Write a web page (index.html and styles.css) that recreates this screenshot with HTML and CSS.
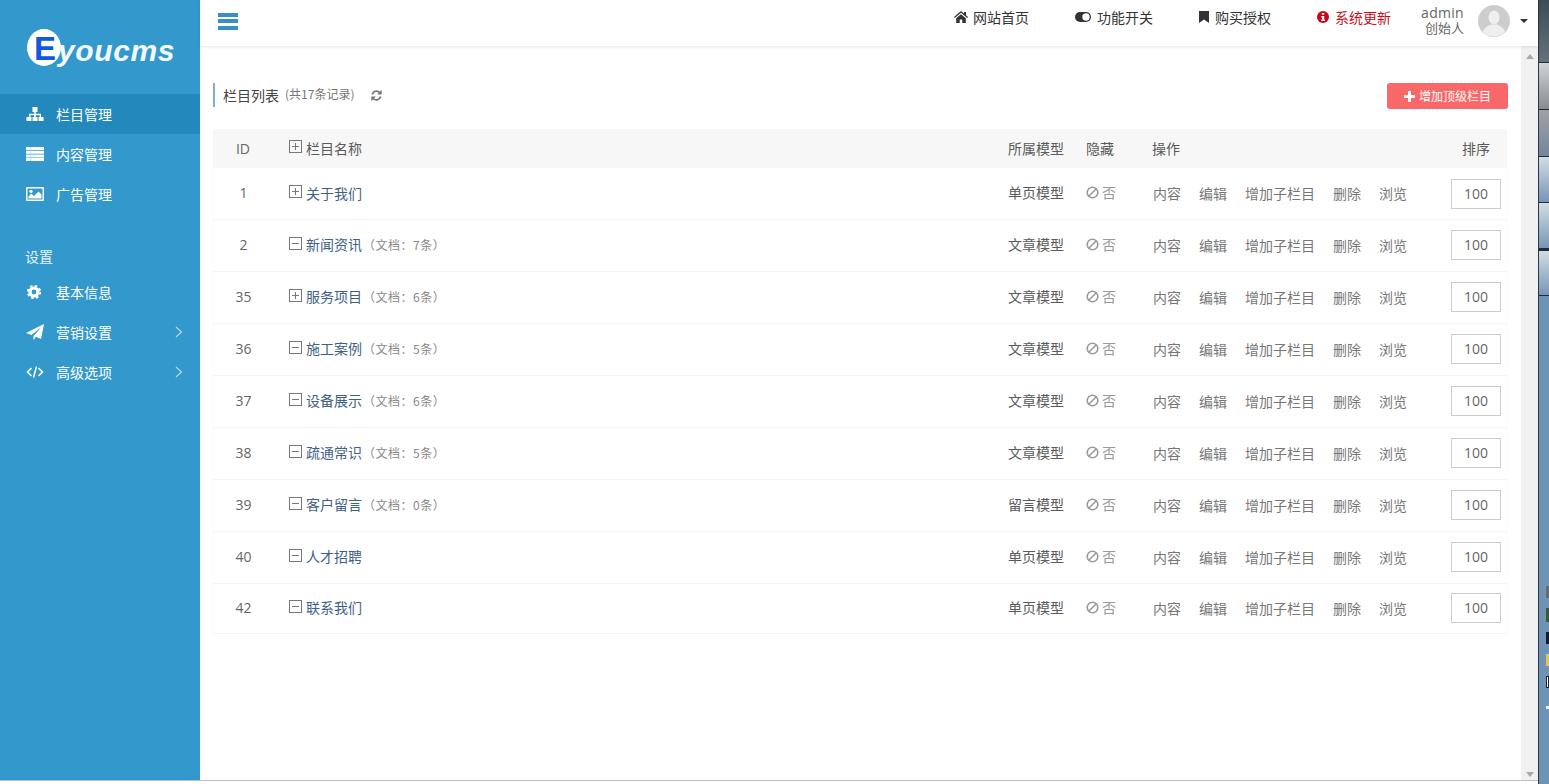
FILE: index.html
```html
<!DOCTYPE html>
<html lang="zh-CN">
<head>
<meta charset="utf-8">
<title>栏目管理</title>
<link rel="stylesheet" href="styles.css">
</head>
<body>
<svg class="defs" aria-hidden="true">
  <symbol id="i-ban" viewBox="0 0 14 14"><circle cx="7" cy="7" r="5.700" fill="none" stroke="currentColor" stroke-width="1.700"/><path d="M3 11 11 3" stroke="currentColor" stroke-width="1.700"/></symbol>
</svg>
<div class="screen">
  <div class="app">
    <aside class="sidebar">
      <div class="logo"><span class="logo-mark">E</span><span class="logo-text">youcms</span></div>
      <nav class="nav">
        <a class="nav-item active">
          <svg class="nav-icon" viewBox="0 0 18 14"><path d="M6.500 0h5v5h-1.700v1.800H15V10h2.500v4h-5v-4h1.200V8.200H9.800V10h1.700v4h-5v-4h1.700V8.200H4.300V10h1.200v4h-5v-4H3V6.800h5.200V5H6.500z" fill="#fff"/></svg>
          <span>栏目管理</span></a>
        <a class="nav-item">
          <svg class="nav-icon" viewBox="0 0 18 14"><path d="M0 0h18v3H0zM0 3.700h18v3H0zM0 7.400h18v3H0zM0 11h18v3H0z" fill="#fff"/><path d="M4.500 0h.7v14h-.7z" fill="#a8d4ee"/></svg>
          <span>内容管理</span></a>
        <a class="nav-item">
          <svg class="nav-icon" viewBox="0 0 18 14"><path d="M1 0h16a1 1 0 0 1 1 1v12a1 1 0 0 1-1 1H1a1 1 0 0 1-1-1V1a1 1 0 0 1 1-1zm.5 1.500v11h15v-11z" fill="#fff"/><path d="M2.500 11.500V9.500l3-3 2.500 2.500 4.500-4.500 3 3v4z" fill="#fff"/><circle cx="5" cy="4.300" r="1.600" fill="#fff"/></svg>
          <span>广告管理</span></a>
        <div class="nav-title">设置</div>
        <a class="nav-item">
          <svg class="nav-icon" viewBox="0 0 18 14"><circle cx="8" cy="7" r="4" fill="none" stroke="#fff" stroke-width="3.200"/><circle cx="8" cy="7" r="6.200" fill="none" stroke="#fff" stroke-width="1.800" stroke-dasharray="2.600 2.270"/></svg>
          <span>基本信息</span></a>
        <a class="nav-item has-sub">
          <svg class="nav-icon plane" viewBox="0 0 18 16"><path d="M18 0 15 15 10 12.800 7.500 16V12L15.500 3 5.500 11 0 9z" fill="#fff"/></svg>
          <span>营销设置</span>
          <svg class="nav-arrow" viewBox="0 0 8 12"><path d="M1 1l5.500 5L1 11" fill="none" stroke="currentColor" stroke-width="1.400"/></svg></a>
        <a class="nav-item has-sub">
          <svg class="nav-icon" viewBox="0 0 18 14"><path d="M5.500 3 1.500 7l4 4M12.500 3l4 4-4 4M10.500 1.500l-3 11" fill="none" stroke="#fff" stroke-width="1.500"/></svg>
          <span>高级选项</span>
          <svg class="nav-arrow" viewBox="0 0 8 12"><path d="M1 1l5.500 5L1 11" fill="none" stroke="currentColor" stroke-width="1.400"/></svg></a>
      </nav>
    </aside>
    <div class="main">
      <header class="topbar">
        <div class="burger"><i></i><i></i><i></i></div>
        <div class="top-links">
          <a class="top-link l-home"><svg class="top-icon" viewBox="0 0 14 12"><path d="M7 0l3 2.600V1h2v3.300L14 6l-.8 1L7 1.800.8 7 0 6zM2.200 7.200 7 3.200l4.800 4V12H8.300V8.600H5.700V12H2.200z" fill="#333"/></svg><span>网站首页</span></a>
          <a class="top-link l-toggle"><svg class="top-icon t-wide" viewBox="0 0 16 10"><rect width="16" height="10" rx="5" fill="#333"/><circle cx="11" cy="5" r="3.700" fill="#fff"/></svg><span>功能开关</span></a>
          <a class="top-link l-book"><svg class="top-icon t-book" viewBox="0 0 10 12"><path d="M0 0h10v12L5 8.500 0 12z" fill="#333"/></svg><span>购买授权</span></a>
          <a class="top-link l-update"><svg class="top-icon t-info" viewBox="0 0 12 12"><circle cx="6" cy="6" r="6" fill="#d0021b"/><path d="M4.800 2h2.400v1.800H4.800zM4.300 5h2.900v3.500h.8V10H4.300V8.500h.8v-2h-.8z" fill="#fff"/></svg><span>系统更新</span></a>
        </div>
        <div class="user">
          <div class="user-names"><span class="user-name">admin</span><span class="user-role">创始人</span></div>
          <svg class="avatar" viewBox="0 0 32 32"><circle cx="16" cy="16" r="16" fill="#cdcdcd"/><ellipse cx="16" cy="12.500" rx="5.500" ry="7" fill="#efefef"/><path d="M5 27c1-5 6-6 8-7.500h6c2 1.500 7 2.500 8 7.500a16 16 0 0 1-22 0z" fill="#efefef"/></svg>
          <i class="caret"></i>
        </div>
      </header>
      <div class="body">
        <div class="content">
          <div class="page-head">
            <div class="page-title"><span class="title-main">栏目列表</span><span class="title-sub">(共17条记录)</span>
              <svg class="refresh" viewBox="0 0 13 13"><path d="M1.500 5.400A5.200 5.200 0 0 1 10 2.600L11.700.9v4.600H7.100l1.700-1.700A3.400 3.400 0 0 0 3.300 5.400zM11.500 7.600A5.200 5.200 0 0 1 3 10.400L1.300 12.100V7.500h4.600L4.200 9.200A3.400 3.400 0 0 0 9.700 7.600z" fill="#777"/></svg>
            </div>
            <a class="add-btn"><svg class="add-plus" viewBox="0 0 11 11"><path d="M4 0h3v4h4v3H7v4H4V7H0V4h4z" fill="#fff"/></svg>增加顶级栏目</a>
          </div>
          <div class="table">
            <div class="row thead">
              <div class="c-id">ID</div><div class="c-name"><i class="tree plus"></i>栏目名称</div><div class="c-model">所属模型</div><div class="c-hide">隐藏</div><div class="c-op">操作</div><div class="c-sort">排序</div>
            </div>
            <div class="row first">
              <div class="c-id">1</div><div class="c-name"><i class="tree plus"></i><a class="name">关于我们</a></div><div class="c-model">单页模型</div><div class="c-hide"><svg class="ban"><use href="#i-ban"/></svg>否</div>
              <div class="c-op"><a>内容</a><a>编辑</a><a>增加子栏目</a><a>删除</a><a>浏览</a></div><div class="c-sort"><input class="sort" value="100"></div>
            </div>
            <div class="row">
              <div class="c-id">2</div><div class="c-name"><i class="tree minus"></i><a class="name">新闻资讯</a><span class="count">（文档：7条）</span></div><div class="c-model">文章模型</div><div class="c-hide"><svg class="ban"><use href="#i-ban"/></svg>否</div>
              <div class="c-op"><a>内容</a><a>编辑</a><a>增加子栏目</a><a>删除</a><a>浏览</a></div><div class="c-sort"><input class="sort" value="100"></div>
            </div>
            <div class="row">
              <div class="c-id">35</div><div class="c-name"><i class="tree plus"></i><a class="name">服务项目</a><span class="count">（文档：6条）</span></div><div class="c-model">文章模型</div><div class="c-hide"><svg class="ban"><use href="#i-ban"/></svg>否</div>
              <div class="c-op"><a>内容</a><a>编辑</a><a>增加子栏目</a><a>删除</a><a>浏览</a></div><div class="c-sort"><input class="sort" value="100"></div>
            </div>
            <div class="row">
              <div class="c-id">36</div><div class="c-name"><i class="tree minus"></i><a class="name">施工案例</a><span class="count">（文档：5条）</span></div><div class="c-model">文章模型</div><div class="c-hide"><svg class="ban"><use href="#i-ban"/></svg>否</div>
              <div class="c-op"><a>内容</a><a>编辑</a><a>增加子栏目</a><a>删除</a><a>浏览</a></div><div class="c-sort"><input class="sort" value="100"></div>
            </div>
            <div class="row">
              <div class="c-id">37</div><div class="c-name"><i class="tree minus"></i><a class="name">设备展示</a><span class="count">（文档：6条）</span></div><div class="c-model">文章模型</div><div class="c-hide"><svg class="ban"><use href="#i-ban"/></svg>否</div>
              <div class="c-op"><a>内容</a><a>编辑</a><a>增加子栏目</a><a>删除</a><a>浏览</a></div><div class="c-sort"><input class="sort" value="100"></div>
            </div>
            <div class="row">
              <div class="c-id">38</div><div class="c-name"><i class="tree minus"></i><a class="name">疏通常识</a><span class="count">（文档：5条）</span></div><div class="c-model">文章模型</div><div class="c-hide"><svg class="ban"><use href="#i-ban"/></svg>否</div>
              <div class="c-op"><a>内容</a><a>编辑</a><a>增加子栏目</a><a>删除</a><a>浏览</a></div><div class="c-sort"><input class="sort" value="100"></div>
            </div>
            <div class="row">
              <div class="c-id">39</div><div class="c-name"><i class="tree minus"></i><a class="name">客户留言</a><span class="count">（文档：0条）</span></div><div class="c-model">留言模型</div><div class="c-hide"><svg class="ban"><use href="#i-ban"/></svg>否</div>
              <div class="c-op"><a>内容</a><a>编辑</a><a>增加子栏目</a><a>删除</a><a>浏览</a></div><div class="c-sort"><input class="sort" value="100"></div>
            </div>
            <div class="row">
              <div class="c-id">40</div><div class="c-name"><i class="tree minus"></i><a class="name">人才招聘</a></div><div class="c-model">单页模型</div><div class="c-hide"><svg class="ban"><use href="#i-ban"/></svg>否</div>
              <div class="c-op"><a>内容</a><a>编辑</a><a>增加子栏目</a><a>删除</a><a>浏览</a></div><div class="c-sort"><input class="sort" value="100"></div>
            </div>
            <div class="row last">
              <div class="c-id">42</div><div class="c-name"><i class="tree minus"></i><a class="name">联系我们</a></div><div class="c-model">单页模型</div><div class="c-hide"><svg class="ban"><use href="#i-ban"/></svg>否</div>
              <div class="c-op"><a>内容</a><a>编辑</a><a>增加子栏目</a><a>删除</a><a>浏览</a></div><div class="c-sort"><input class="sort" value="100"></div>
            </div>
          </div>
        </div>
        <div class="scrollbar"><i class="arrow up"></i><i class="arrow down"></i></div>
      </div>
    </div>
  </div>
  <div class="desktop">
    <div class="win w1"></div><div class="win w2"></div><div class="win w3"></div><div class="win w4"></div><div class="win w4b"></div><div class="win w5"></div>
    <div class="wall">
      <i class="tile t1"></i><i class="tile t2"></i><i class="tile t3"></i><i class="tile t4"></i><i class="tile t5"></i><i class="tile t6"></i>
    </div>
  </div>
</div>
</body>
</html>
```
FILE: styles.css
```css
* { box-sizing: border-box; }
html, body { margin: 0; height: 100%; overflow: hidden; background: #fff; }
body { font: 14px/20px "Noto Sans CJK SC", "Open Sans", sans-serif; color: #555; }
a { color: inherit; text-decoration: none; }
.defs { display: none; }
.screen { display: flex; width: 1549px; height: 784px; background: #6f93b5; }
.app { display: flex; width: 1538px; height: 781px; flex: none; background: #fff; border-bottom: 1px solid #bdbdbd; box-shadow: 0 3px 0 #fff; }

.sidebar { width: 200px; flex: none; background: #3398cc; color: #fff; }
.logo { height: 94px; padding: 27px 0 0 27px; display: flex; align-items: flex-start; white-space: nowrap; }
.logo-mark { width: 34px; height: 37px; margin-top: 2px; border-radius: 50%; background: #fff; color: #1058dd; font: bold 33px/39px "Liberation Sans", sans-serif; padding-left: 7px; flex: none; }
.logo-text { margin-left: -3px; margin-top: 7px; font: italic bold 30px/34px "Liberation Sans", sans-serif; letter-spacing: .6px; color: #f2f9fd; }
.nav-item { display: flex; align-items: center; height: 40px; padding: 0 17px 0 26px; color: #fff; }
.nav-item.active { background: #2389bd; }
.nav-icon { width: 18px; height: 14px; margin-right: 12px; flex: none; }
.plane { height: 16px; }
.nav-arrow { width: 8px; height: 12px; margin-left: auto; color: #a9d5ee; }
.nav-title { padding: 32px 0 6px 25px; height: 58px; color: #e8f4fb; }

.main { flex: 1; display: flex; flex-direction: column; min-width: 0; }
.topbar { height: 46px; flex: none; display: flex; align-items: center; padding-left: 18px; box-shadow: 0 1px 3px rgba(0,0,0,.1); position: relative; z-index: 1; background: #fff; color: #333; }
.burger { width: 20px; height: 17px; display: flex; flex-direction: column; justify-content: space-between; margin-top: -4px; }
.burger i { display: block; height: 4px; background: #3a8fc2; }
.top-links { margin-left: auto; display: flex; align-items: center; margin-top: -13px; }
.top-link { display: flex; align-items: center; margin-right: 46px; }
.top-icon { width: 14px; height: 12px; margin-right: 5px; flex: none; }
.t-wide { width: 16px; height: 10px; margin-right: 6px; }
.t-book { width: 10px; margin-right: 6px; }
.t-info { width: 12px; margin-right: 6px; }
.l-update { color: #c9101e; margin-right: 30px; }
.user { display: flex; align-items: center; margin-right: 10px; }
.user-names { display: flex; flex-direction: column; align-items: flex-end; width: 43px; margin-top: -6px; color: #666; }
.user-name { font: 14px/15px "Open Sans", sans-serif; letter-spacing: .3px; }
.user-role { font-size: 13px; line-height: 15px; }
.avatar { width: 32px; height: 32px; margin: -5px 0 0 14px; }
.caret { width: 0; height: 0; margin-left: 10px; margin-top: -5px; border: 4px solid transparent; border-top-color: #333; border-bottom: 0; }

.body { flex: 1; display: flex; min-height: 0; }
.content { flex: 1; padding: 37px 13px 0 13px; min-width: 0; }
.page-head { display: flex; justify-content: space-between; height: 46px; }
.page-title { height: 24px; border-left: 2px solid #7fb0c9; padding-left: 8px; display: flex; align-items: center; }
.title-main { color: #444; }
.title-sub { font-size: 12px; color: #777; margin-left: 6px; margin-top: -2px; }
.refresh { width: 13px; height: 13px; margin-left: 16px; }
.add-btn { width: 121px; height: 26px; border-radius: 3px; background: #f96868; color: #fff; font-size: 12px; display: flex; align-items: center; padding-left: 17px; }
.add-plus { width: 11px; height: 11px; margin-right: 4px; }

.table { width: 1294px; }
.row { display: grid; grid-template-columns: 60px 735px 78px 66px 1fr 88px; align-items: center; height: 52px; padding-bottom: 2px; border-bottom: 1px solid #f3f3f3; box-shadow: inset 1px 0 #fafafa, inset -1px 0 #fafafa; color: #5a5a5a; }
.thead { height: 39px; padding-bottom: 0; background: #f7f7f7; border: 0; box-shadow: none; }
.last { height: 50px; }
.c-id { text-align: center; font-family: "Open Sans", sans-serif; color: #666; }
.row:not(.thead) .c-id { padding-left: 1px; }
.c-name { padding-left: 16px; display: flex; align-items: center; }
.thead .c-name { margin-top: -1px; }
.c-model { margin-top: -2px; }
.tree { position: relative; width: 13px; height: 13px; margin: -3px 4px 0 0; border: 1px solid #777; flex: none; }
.tree::before { content: ""; position: absolute; left: 2px; right: 2px; top: 5px; height: 1px; background: #777; }
.plus::after { content: ""; position: absolute; top: 2px; bottom: 2px; left: 5px; width: 1px; background: #777; }
.name { color: #3f5f86; margin-top: -2px; }
.first .name { margin-top: 0; }
.count { font-size: 12px; color: #888; margin-left: 1px; letter-spacing: .5px; }
.c-hide { display: flex; align-items: center; color: #999; margin-top: -2px; }
.thead .c-hide { color: #5a5a5a; }
.ban { width: 13px; height: 13px; margin: 1px 3px 0 0; color: #999; }
.c-op { display: flex; gap: 18px; padding-left: 1px; color: #777; }
.thead .c-op { padding-left: 0; color: #5a5a5a; margin-top: -2px; }
.thead .c-sort { margin-top: -2px; }
.c-sort { text-align: right; padding-right: 17px; }
.row:not(.thead) .c-sort { padding-right: 6px; }
.row.first .c-sort { margin-top: 1px; margin-bottom: -1px; }
.sort { display: block; margin-left: auto; width: 50px; height: 30px; border: 1px solid #ccc; text-align: center; font: 14px "Open Sans", sans-serif; color: #666; background: #fff; padding: 0; }

.scrollbar { width: 17px; flex: none; background: #f1f1f1; display: flex; flex-direction: column; justify-content: space-between; align-items: center; padding: 8px 0 3px; }
.arrow { width: 0; height: 0; border: 4px solid transparent; }
.up { border-top: 0; border-bottom: 5px solid #aaa; }
.down { border-bottom: 0; border-top: 5px solid #aaa; }

.desktop { width: 11px; flex: none; height: 784px; display: flex; flex-direction: column; border-left: 1px solid #26394a; background: #6f93b5; }
.win { flex: none; border-bottom: 1px solid #1f2d3a; }
.w1 { height: 63px; background: linear-gradient(#3e4c57, #667279); }
.w2 { height: 47px; background: linear-gradient(#cfd3d6, #868c90); }
.w3 { height: 47px; background: linear-gradient(#9ea2a5, #77859a); }
.w4 { height: 46px; background: linear-gradient(#d3dce2, #7796b5); }
.w4b { height: 47px; border-bottom-width: 2px; background: linear-gradient(#d3dce2, #7796b5); }
.w5 { height: 46px; border-top: 1px solid #1f2d3a; background: linear-gradient(#d3dce2, #7796b5); }
.wall { flex: 1 0 auto; padding: 290px 0 0 7px; display: flex; flex-direction: column; background: #6f93b5; }
.tile { display: block; width: 3px; height: 12px; margin-bottom: 10px; }
.t1 { background: #6a6a6a; }
.t2 { background: #3c5a2c; height: 14px; }
.t3 { background: #1a1a2a; }
.t4 { background: #e2c35a; }
.t5 { background: #fff; border: 1px solid #222; }
.t6 { background: #efefef; height: 3px; margin-top: 8px; }
```
